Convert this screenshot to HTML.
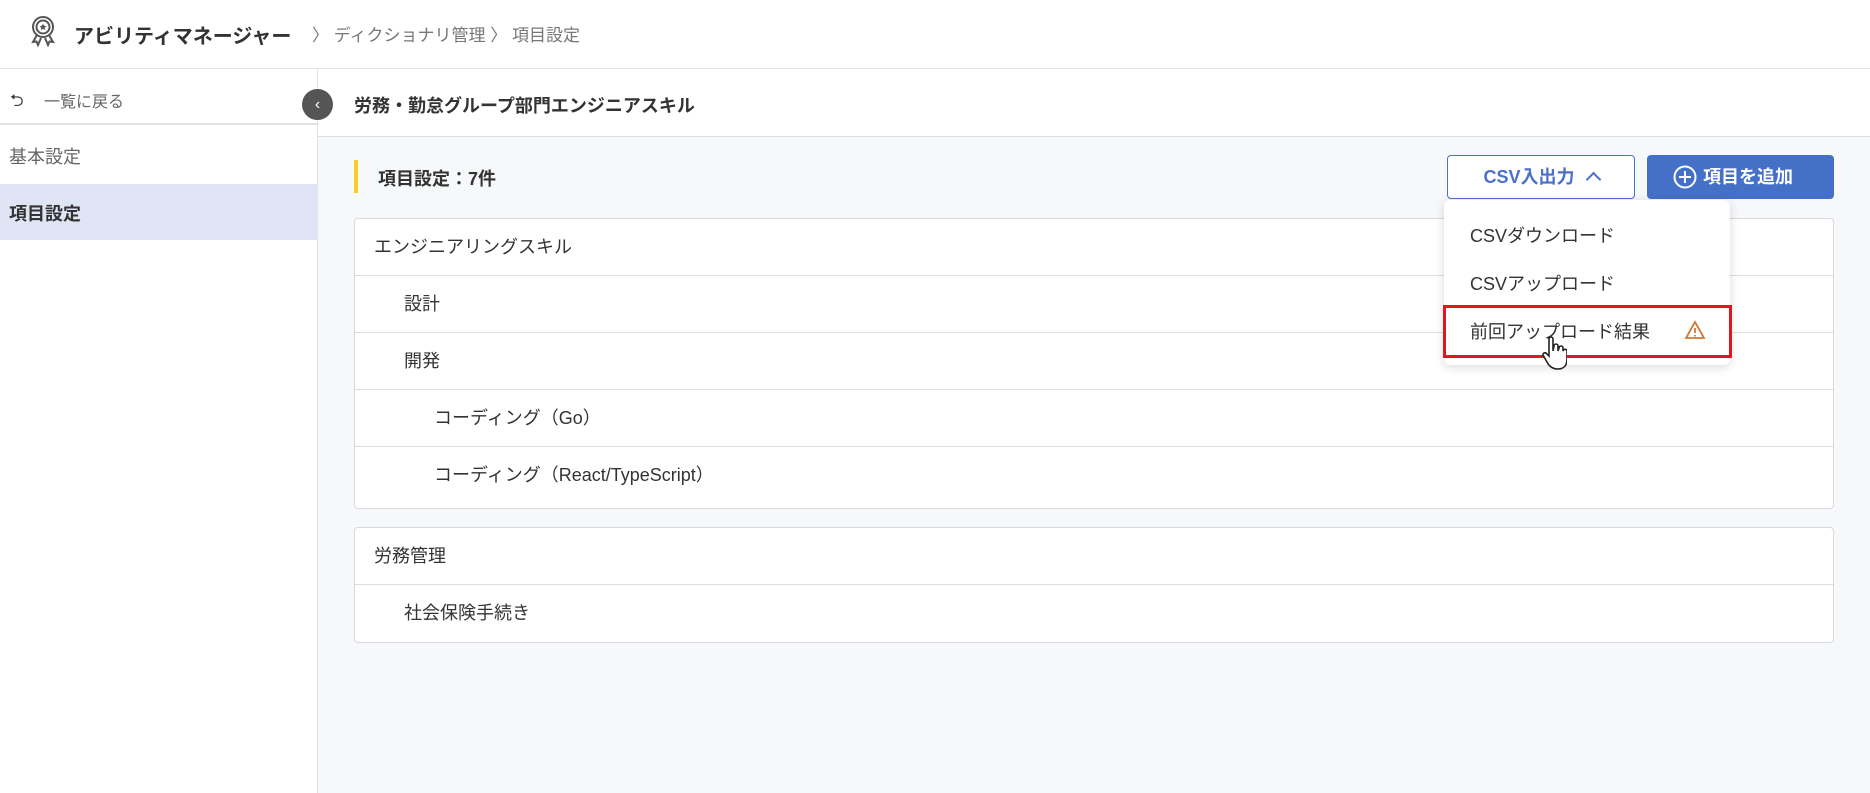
<!DOCTYPE html>
<html><head><meta charset="utf-8"><style>
*{box-sizing:border-box;margin:0;padding:0}
body{width:1870px;height:793px;overflow:hidden;background:#fff;font-family:"Liberation Sans","Noto Sans CJK JP",sans-serif;color:#333;position:relative}
.abs{position:absolute}
.hdr{left:0;top:0;width:1870px;height:69px;border-bottom:1px solid #e3e4e8;box-shadow:0 1px 3px rgba(0,0,0,.06);background:#fff}
.side{left:0;top:69px;width:318px;height:724px;border-right:1px solid #e3e4e8;background:#fff}
.main{left:318px;top:69px;width:1552px;height:724px;background:#f7f8fa}
.mh{left:318px;top:69px;width:1552px;height:68px;background:#fff;border-bottom:1px solid #dcdde2}
.card{background:#fff;border:1px solid #d8d9de;border-radius:4px}
.row{height:57px;border-bottom:1px solid #dcdde2;font-size:18px;line-height:57px;color:#333}
.row:last-child{border-bottom:none}
</style></head><body>
<div class="abs hdr"></div>
<svg class="abs" style="left:29px;top:14px" width="28" height="34" viewBox="0 0 28 34" fill="none" stroke="#555" stroke-width="2">
<circle cx="14" cy="13" r="10"/><circle cx="14" cy="13" r="6.5"/>
<path d="M14 9.5l1.1 2.3 2.4.3-1.8 1.6.5 2.4L14 14.9l-2.2 1.2.5-2.4-1.8-1.6 2.4-.3z" fill="#555" stroke="none"/>
<path d="M8 21l-4 7 3.5-.5L9 31l3-7M20 21l4 7-3.5-.5L19 31l-3-7"/></svg>
<div class="abs" style="left:74px;top:20px;font-size:20px;font-weight:bold;color:#333">アビリティマネージャー</div>
<div class="abs" style="left:312px;top:21px;font-size:17px;color:#777">〉 ディクショナリ管理 〉 項目設定</div>

<div class="abs side"></div>
<div class="abs" style="left:10px;top:88px;font-size:17px;color:#333">⮌</div>
<div class="abs" style="left:44px;top:88px;font-size:16px;color:#666">一覧に戻る</div>
<div class="abs" style="left:0;top:123px;width:318px;height:2px;background:#e0e1e5"></div>
<div class="abs" style="left:9px;top:143px;font-size:18px;color:#666">基本設定</div>
<div class="abs" style="left:0;top:184px;width:318px;height:56px;background:#dfe5f5"></div>
<div class="abs" style="left:9px;top:200px;font-size:18px;font-weight:bold;color:#333">項目設定</div>

<div class="abs main"></div>
<div class="abs mh"></div>
<div class="abs" style="left:302px;top:89px;width:31px;height:31px;border-radius:50%;background:#555;color:#fff;font-size:16px;line-height:31px;text-align:center">‹</div>
<div class="abs" style="left:354px;top:92px;font-size:18px;font-weight:bold;color:#333">労務・勤怠グループ部門エンジニアスキル</div>

<div class="abs" style="left:354px;top:160px;width:4px;height:33px;background:#f5cf25"></div>
<div class="abs" style="left:378px;top:165px;font-size:18px;font-weight:bold;color:#333">項目設定：7件</div>

<div class="abs" style="left:1447px;top:155px;width:188px;height:44px;border:1px solid #4a71c9;border-radius:4px;background:#fff;color:#4a71c9;font-size:18px;font-weight:bold;line-height:42px;text-align:center">CSV入出力 <span style="display:inline-block;width:11px;height:11px;border-left:2px solid #4a71c9;border-top:2px solid #4a71c9;transform:rotate(45deg);margin-left:8px;position:relative;top:2px"></span></div>
<div class="abs" style="left:1647px;top:155px;width:187px;height:44px;border-radius:4px;background:#4570c8;color:#fff;font-size:18px;font-weight:bold;line-height:44px;padding-left:26px">
<svg style="position:absolute;left:26px;top:10px" width="24" height="24" viewBox="0 0 24 24" fill="none" stroke="#fff" stroke-width="2"><circle cx="12" cy="12" r="10.5"/><path d="M12 6v12M6 12h12"/></svg>
<span style="margin-left:30px">項目を追加</span></div>

<div class="abs card" style="left:354px;top:218px;width:1480px;height:291px">
<div class="row" style="padding-left:19px">エンジニアリングスキル</div>
<div class="row" style="padding-left:49px">設計</div>
<div class="row" style="padding-left:49px">開発</div>
<div class="row" style="padding-left:79px">コーディング（Go）</div>
<div class="row" style="padding-left:79px">コーディング（React/TypeScript）</div>
</div>
<div class="abs card" style="left:354px;top:527px;width:1480px;height:116px">
<div class="row" style="padding-left:19px">労務管理</div>
<div class="row" style="padding-left:49px">社会保険手続き</div>
</div>

<div class="abs" style="left:1444px;top:200px;width:286px;height:165px;background:#fff;border-radius:6px;box-shadow:0 2px 10px rgba(0,0,0,.15)"></div>
<div class="abs" style="left:1470px;top:222px;font-size:18px;color:#333">CSVダウンロード</div>
<div class="abs" style="left:1470px;top:270px;font-size:18px;color:#333">CSVアップロード</div>
<div class="abs" style="left:1443px;top:305px;width:289px;height:53px;border:3px solid #e8141b"></div>
<div class="abs" style="left:1470px;top:318px;font-size:18px;color:#333">前回アップロード結果</div>
<svg class="abs" style="left:1684px;top:320px" width="22" height="20" viewBox="0 0 22 20" fill="none" stroke="#d07a3a" stroke-width="1.8"><path d="M11 2L20 18H2Z"/><path d="M11 8v5M11 15v1.5"/></svg>
<svg class="abs" style="left:1541px;top:335px" width="26" height="40" viewBox="0 0 26 40"><path d="M8 4a2 2 0 014 0v12l1-5a2 2 0 014 0v5l1-3a2 2 0 014 0v3l.5-1a2 2 0 013.5 1v8c0 6-3 10-9 10s-9-3-11-7l-4-7a2 2 0 013-2l3 3z" fill="#fff" stroke="#222" stroke-width="1.6"/></svg>
</body></html>
